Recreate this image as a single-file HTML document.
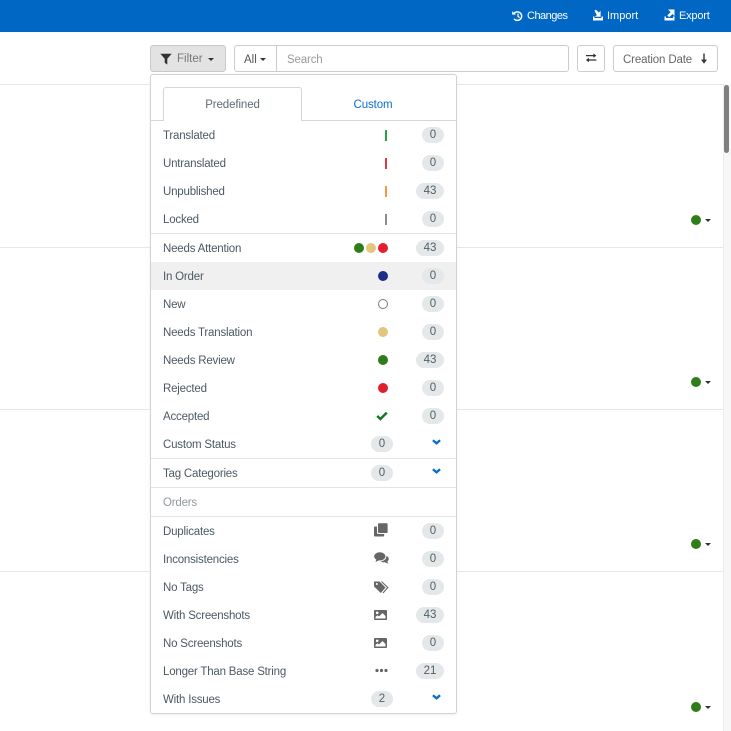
<!DOCTYPE html>
<html><head><meta charset="utf-8">
<style>
html,body{margin:0;padding:0;width:731px;height:731px;overflow:hidden;background:#fff}
body{position:relative;font-family:"Liberation Sans",sans-serif;font-size:11.5px;color:#4d5c63}
.a{position:absolute}
.t{position:absolute;left:163px;height:16px;line-height:16px;margin-top:1px;white-space:nowrap;color:#4a5a62;letter-spacing:-.2px}
.b{position:absolute;height:16px;line-height:16px;border-radius:8px;background:#e4e8e9;text-align:center;color:#50606a;font-size:11.5px}
.b0{left:422px;width:22px}.b2{left:416px;width:28px}.bl{left:371px;width:22px}
.hl{position:absolute;left:0;width:723px;height:1px;background:#e6e6e6}
.sep{position:absolute;left:151px;width:305px;height:1px;background:#e4e4e4}
.bar{position:absolute;left:385px;width:2px;height:11px}
.dot{position:absolute;width:10px;height:10px;border-radius:50%}
.car{position:absolute;width:0;height:0;border-left:3.5px solid transparent;border-right:3.5px solid transparent;border-top:3.5px solid #333}
.ht{position:absolute;top:8px;height:16px;line-height:16px;color:#fff;font-size:11px;white-space:nowrap}
svg{position:absolute;display:block}
</style></head><body>
<div class="a" style="left:0;top:0;width:731px;height:32px;background:#0067c5"></div>

<svg style="left:512px;top:10px" width="11" height="12" viewBox="0 0 11 12"><path d="M2.200 3.200A4.300 4.300 0 1 1 2 8.800" fill="none" stroke="#fff" stroke-width="1.500"/><path d="M.2 1.200 4 4.600H.2z" fill="#fff"/><path d="M6 3.600V6.400L7.600 7.600" fill="none" stroke="#fff" stroke-width="1.200"/></svg>
<div class="ht" style="left:527px;letter-spacing:-.5px">Changes</div>
<svg style="left:592px;top:9px" width="12" height="12" viewBox="0 0 12 12"><path d="M1 7.500H2.500V9H9.500V7.500H11V11.500H1z" fill="#fff"/><path d="M2.500 1.800 3.800.6 6.800 3.500 8.600 1.800V7.800H3L4.800 6z" fill="#fff"/></svg>
<div class="ht" style="left:607px">Import</div>
<svg style="left:664px;top:9px" width="12" height="12" viewBox="0 0 12 12"><path d="M.5 7.500H2V9H9V7.500H10.500V11.500H.5z" fill="#fff"/><path d="M4 .5H10.500V7L8.500 5 5.200 8.300 3.300 6.500 6.600 3z" fill="#fff"/></svg>
<div class="ht" style="left:679px;letter-spacing:-.2px">Export</div>

<!-- list lines -->
<div class="hl" style="top:84px"></div>
<div class="hl" style="top:247px"></div>
<div class="hl" style="top:409px"></div>
<div class="hl" style="top:571px"></div>

<!-- scrollbar -->
<div class="a" style="left:723px;top:84px;width:8px;height:647px;background:#f7f7f7;border-left:1px solid #ececec;box-sizing:border-box"></div>
<div class="a" style="left:724px;top:85px;width:5px;height:68px;border-radius:3px;background:#7f7f7f"></div>

<!-- right status -->
<div class="dot" style="left:691px;top:215px;background:#2f7d1a"></div><div class="car" style="left:705px;top:218.500px"></div>
<div class="dot" style="left:691px;top:377px;background:#2f7d1a"></div><div class="car" style="left:705px;top:380.500px"></div>
<div class="dot" style="left:691px;top:539px;background:#2f7d1a"></div><div class="car" style="left:705px;top:542.500px"></div>
<div class="dot" style="left:691px;top:702px;background:#2f7d1a"></div><div class="car" style="left:705px;top:705.500px"></div>

<!-- toolbar -->
<div class="a" style="left:150px;top:45px;width:76px;height:27px;box-sizing:border-box;background:#e3e3e3;border:1px solid #c9c9c9;border-radius:3px"></div>
<svg style="left:160px;top:53px" width="12" height="12" viewBox="0 0 12 12"><path d="M.3 .8h11.400L7.300 5.800V11.600L4.700 9.800V5.800z" fill="#333"/></svg>
<div class="a" style="left:177px;top:51px;line-height:16px;color:#777">Filter</div>
<div class="car" style="left:208px;top:57.500px"></div>

<div class="a" style="left:234px;top:45px;width:335px;height:27px;box-sizing:border-box;border:1px solid #ccc;border-radius:3px"></div>
<div class="a" style="left:276px;top:45px;width:1px;height:27px;background:#ccc"></div>
<div class="a" style="left:244px;top:52px;line-height:16px;color:#555">All</div>
<div class="car" style="left:260px;top:58px"></div>
<div class="a" style="left:287px;top:52px;line-height:16px;color:#9a9a9a;letter-spacing:-.15px">Search</div>

<div class="a" style="left:577px;top:45px;width:28px;height:27px;box-sizing:border-box;border:1px solid #ccc;border-radius:3px"></div>
<svg style="left:586px;top:53px" width="11" height="10" viewBox="0 0 11 10"><path d="M0 2.600h8M10.400 7H2.400" stroke="#333" stroke-width="1.200" fill="none"/><path d="M7.400 .4 10.400 2.600 7.400 4.800zM3 4.800 0 7l3 2.200z" fill="#333"/></svg>

<div class="a" style="left:613px;top:45px;width:105px;height:27px;box-sizing:border-box;border:1px solid #ccc;border-radius:3px"></div>
<div class="a" style="left:623px;top:52px;line-height:16px;color:#666;letter-spacing:-.15px">Creation Date</div>
<svg style="left:700px;top:53px" width="8" height="11" viewBox="0 0 8 11"><path d="M4 .5V8" stroke="#333" stroke-width="1.400"/><path d="M1 6.600h6L4 10.600z" fill="#333"/></svg>

<!-- dropdown -->
<div class="a" style="left:150px;top:74px;width:307px;height:640px;box-sizing:border-box;background:#fff;border:1px solid #d2d2d2;border-radius:3px;box-shadow:0 1px 3px rgba(0,0,0,.06)"></div>
<div class="a" style="left:151px;top:120px;width:305px;height:1px;background:#d6d6d6"></div>
<div class="a" style="left:163px;top:87px;width:139px;height:34px;box-sizing:border-box;background:#fff;border:1px solid #d6d6d6;border-bottom:none;border-radius:3px 3px 0 0"></div>
<div class="a" style="left:163px;top:97px;width:139px;text-align:center;line-height:16px;color:#5b6b72;letter-spacing:-.1px">Predefined</div>
<div class="a" style="left:302px;top:97px;width:142px;text-align:center;line-height:16px;color:#0a6fc9;letter-spacing:-.1px">Custom</div>

<div class="a" style="left:151px;top:262px;width:305px;height:28px;background:#f0f0f0"></div>

<div class="sep" style="top:233px"></div>
<div class="sep" style="top:458px"></div>
<div class="sep" style="top:487px"></div>
<div class="sep" style="top:516px"></div>

<div class="t" style="top:127px">Translated</div>
<div class="t" style="top:155px">Untranslated</div>
<div class="t" style="top:183px">Unpublished</div>
<div class="t" style="top:211px">Locked</div>
<div class="t" style="top:240px">Needs Attention</div>
<div class="t" style="top:268px">In Order</div>
<div class="t" style="top:296px">New</div>
<div class="t" style="top:324px">Needs Translation</div>
<div class="t" style="top:352px">Needs Review</div>
<div class="t" style="top:380px">Rejected</div>
<div class="t" style="top:408px">Accepted</div>
<div class="t" style="top:436px">Custom Status</div>
<div class="t" style="top:465px">Tag Categories</div>
<div class="t" style="top:494px;color:#8f9a9f">Orders</div>
<div class="t" style="top:523px">Duplicates</div>
<div class="t" style="top:551px">Inconsistencies</div>
<div class="t" style="top:579px">No Tags</div>
<div class="t" style="top:607px">With Screenshots</div>
<div class="t" style="top:635px">No Screenshots</div>
<div class="t" style="top:663px">Longer Than Base String</div>
<div class="t" style="top:691px">With Issues</div>

<div class="bar" style="top:130px;background:#2ea24a"></div>
<div class="bar" style="top:158px;background:#e0393e"></div>
<div class="bar" style="top:186px;background:#f79a3b"></div>
<div class="bar" style="top:214px;background:#8c8c8c"></div>

<div class="dot" style="left:354px;top:243px;background:#2f7d1a"></div>
<div class="dot" style="left:366px;top:243px;background:#e3c57e"></div>
<div class="dot" style="left:378px;top:243px;background:#e0202f"></div>
<div class="dot" style="left:378px;top:271px;background:#1c2f87"></div>
<div class="dot" style="left:378px;top:299px;box-sizing:border-box;background:#fff;border:1.300px solid #777"></div>
<div class="dot" style="left:378px;top:327px;background:#e3c57e"></div>
<div class="dot" style="left:378px;top:355px;background:#2f7d1a"></div>
<div class="dot" style="left:378px;top:383px;background:#e0202f"></div>
<svg style="left:376px;top:411px" width="12" height="10" viewBox="0 0 12 10"><path d="M1.200 5 4.400 8 10.800 1.600" fill="none" stroke="#14761f" stroke-width="2.500"/></svg>

<div class="b b0" style="top:127px">0</div>
<div class="b b0" style="top:155px">0</div>
<div class="b b2" style="top:183px">43</div>
<div class="b b0" style="top:211px">0</div>
<div class="b b2" style="top:240px">43</div>
<div class="b b0" style="top:268px">0</div>
<div class="b b0" style="top:296px">0</div>
<div class="b b0" style="top:324px">0</div>
<div class="b b2" style="top:352px">43</div>
<div class="b b0" style="top:380px">0</div>
<div class="b b0" style="top:408px">0</div>
<div class="b bl" style="top:436px">0</div>
<div class="b bl" style="top:465px">0</div>
<div class="b b0" style="top:523px">0</div>
<div class="b b0" style="top:551px">0</div>
<div class="b b0" style="top:579px">0</div>
<div class="b b2" style="top:607px">43</div>
<div class="b b0" style="top:635px">0</div>
<div class="b b2" style="top:663px">21</div>
<div class="b bl" style="top:691px">2</div>

<svg style="left:432px;top:439px" width="9" height="6" viewBox="0 0 9 6"><path d="M.9 1.200 4.500 4.300 8.100 1.200" fill="none" stroke="#0a6fc9" stroke-width="2.300"/></svg>
<svg style="left:432px;top:468px" width="9" height="6" viewBox="0 0 9 6"><path d="M.9 1.200 4.500 4.300 8.100 1.200" fill="none" stroke="#0a6fc9" stroke-width="2.300"/></svg>
<svg style="left:432px;top:694px" width="9" height="6" viewBox="0 0 9 6"><path d="M.9 1.200 4.500 4.300 8.100 1.200" fill="none" stroke="#0a6fc9" stroke-width="2.300"/></svg>

<!-- duplicates -->
<svg style="left:374px;top:523px" width="14" height="14" viewBox="0 0 14 14"><path d="M0 4.500Q0 3.500 1 3.500H3V9.500Q3 11 4.500 11H10.200V12.500Q10.200 13.500 9.200 13.500H1Q0 13.500 0 12.500z" fill="#666"/><path d="M4 1Q4 .2 5 .2H12.800Q13.600 .2 13.600 1V9Q13.600 10 12.800 10H5Q4 10 4 9z" fill="#666"/></svg>
<!-- comments -->
<svg style="left:374px;top:552px" width="15" height="13" viewBox="0 0 15 13"><ellipse cx="5.800" cy="4.400" rx="5.600" ry="4.100" fill="#666"/><path d="M2.500 7 1.500 10 5.500 8z" fill="#666"/><path d="M12.300 3.800C14 4.600 15 5.800 14.700 7.400 14.500 8.300 14 8.900 13.400 9.400L14.200 11.800 10.800 10.200C9 10.400 7.600 10 6.600 9.200 10 9.200 12.800 7 12.300 3.800z" fill="#666"/></svg>
<!-- tags -->
<svg style="left:374px;top:581px" width="15" height="13" viewBox="0 0 15 13"><path d="M0 .5H5.500L11.500 6.500 6.800 12 0 5.500z" fill="#666"/><circle cx="2.800" cy="3" r="1" fill="#fff"/><path d="M7.500 .5 13.800 6.500 9 12" fill="none" stroke="#666" stroke-width="1.100"/></svg>
<!-- images -->
<svg style="left:374px;top:610px" width="13" height="10" viewBox="0 0 13 10"><rect x="0" y="0" width="13" height="10" rx="1" fill="#666"/><circle cx="3.200" cy="2.800" r="1.300" fill="#fff"/><path d="M1.500 8.500V7L3.500 5.300 5 6.500 8.500 3 11.500 6V8.500z" fill="#fff"/></svg>
<svg style="left:374px;top:638px" width="13" height="10" viewBox="0 0 13 10"><rect x="0" y="0" width="13" height="10" rx="1" fill="#666"/><circle cx="3.200" cy="2.800" r="1.300" fill="#fff"/><path d="M1.500 8.500V7L3.500 5.300 5 6.500 8.500 3 11.500 6V8.500z" fill="#fff"/></svg>
<!-- ellipsis -->
<svg style="left:375px;top:668px" width="13" height="5" viewBox="0 0 13 5"><circle cx="2" cy="2.500" r="1.600" fill="#666"/><circle cx="6.500" cy="2.500" r="1.600" fill="#666"/><circle cx="11" cy="2.500" r="1.600" fill="#666"/></svg>
</body></html>
